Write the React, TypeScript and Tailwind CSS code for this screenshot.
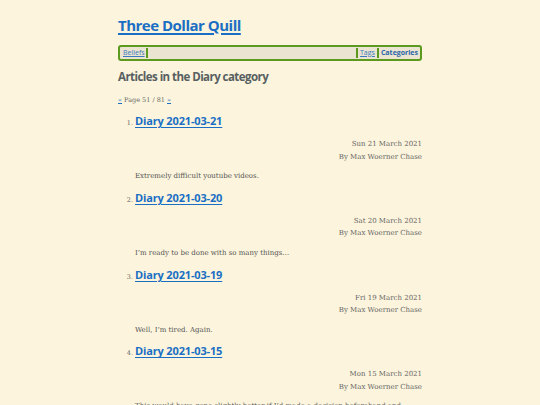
import React from "react";

const items = [
  { n: 1, title: "Diary 2021-03-21", date: "Sun 21 March 2021", summary: "Extremely difficult youtube videos." },
  { n: 2, title: "Diary 2021-03-20", date: "Sat 20 March 2021", summary: "I\u2019m ready to be done with so many things\u2026" },
  { n: 3, title: "Diary 2021-03-19", date: "Fri 19 March 2021", summary: "Well, I\u2019m tired. Again." },
  { n: 4, title: "Diary 2021-03-15", date: "Mon 15 March 2021", summary: "This would have gone slightly better if I\u2019d made a decision beforehand and" },
];

const head = { fontFamily: '"Open Sans", "Noto Sans", sans-serif' };
const body = { fontFamily: '"DejaVu Serif", "Liberation Serif", serif' };

export default function App() {
  return (
    <div className="min-h-[405px] w-full bg-[#fcf4dc] overflow-hidden">
      <div className="mx-auto w-[304px] pt-[14px]">
        <h1 className="text-[15px] leading-[22px] font-bold tracking-[-0.5px]" style={head}>
          <a href="#" className="text-[#1a6fc4] underline decoration-[1.5px] underline-offset-[2px]">Three Dollar Quill</a>
        </h1>
        <nav className="mt-[9px] flex h-[16px] items-center rounded-[3px] border-2 border-[#5b9a1f] bg-[#ebe4d0] px-[2px] text-[7px]" style={head}>
          <a href="#" className="border-r-2 border-[#5b9a1f] pl-[1px] pr-[1px] leading-[10px] text-[#3a7ac0] underline">Beliefs</a>
          <div className="flex-1" />
          <a href="#" className="border-x-2 border-[#5b9a1f] px-[2px] leading-[10px] text-[#3a7ac0] underline">Tags</a>
          <a href="#" className="pl-[2px] leading-[10px] font-bold text-[#2a66a8]">Categories</a>
        </nav>
        <h2 className="mt-[8px] text-[11.5px] leading-[16px] font-bold tracking-[-0.55px] text-[#575f61]" style={head}>Articles in the Diary category</h2>
        <p className="mt-[10px] text-[6.5px] leading-[10px] text-[#666]" style={body}>
          <a href="#" className="text-[#1a6fc4] underline">«</a> Page 51 / 81 <a href="#" className="text-[#1a6fc4] underline">»</a>
        </p>
        <ol className="mt-[6px]">
          {items.map((it) => (
            <li key={it.n} className="flex h-[76.8px] flex-col">
              <div className="mt-[2px] flex items-baseline">
                <span className="w-[17px] pr-[2px] text-right text-[6.5px] text-[#666]" style={body}>{it.n}.</span>
                <a href="#" className="text-[11px] leading-[16px] font-bold tracking-[-0.15px] text-[#1a6fc4] underline decoration-[1px] underline-offset-[2px]" style={head}>{it.title}</a>
              </div>
              <div className="pl-[17px] text-[7px] text-[#666]" style={body}>
                <div className="mt-[9px] text-right leading-[12.5px]">{it.date}</div>
                <div className="text-right leading-[12.5px]">By Max Woerner Chase</div>
                <p className="mt-[7px] leading-[12px] text-[#555]">{it.summary}</p>
              </div>
            </li>
          ))}
        </ol>
      </div>
    </div>
  );
}
